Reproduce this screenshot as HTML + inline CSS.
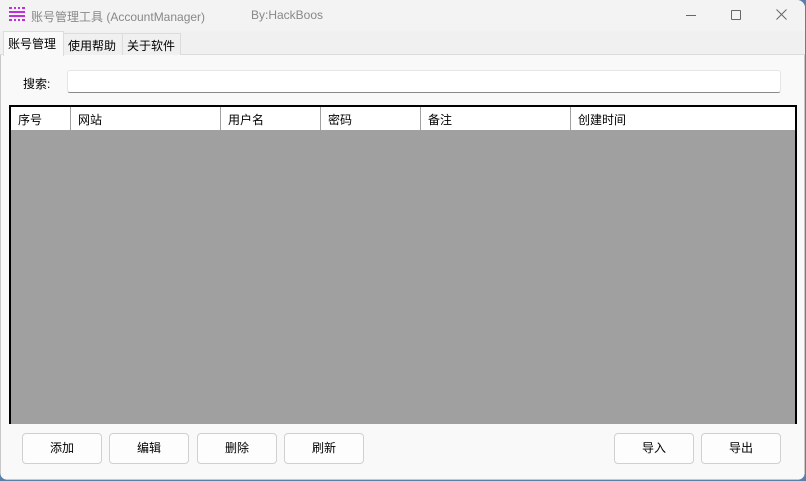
<!DOCTYPE html>
<html><head><meta charset="utf-8"><style>
*{margin:0;padding:0;box-sizing:border-box}
body{width:806px;height:481px;background:#5a7fa8;position:relative;overflow:hidden;font-family:"Liberation Sans","Noto Sans CJK SC",sans-serif;font-size:12px;color:#000}
.win{position:absolute;left:0;top:0;width:805px;height:480px;background:#f9f9f9;box-shadow:inset 0 0 0 1px #c8c8c8;border-radius:0 8px 8px 8px;overflow:hidden}
.title{position:absolute;left:0;top:0;width:100%;height:31px;background:#f3f3f3}
.t{position:absolute;top:8px;color:#888;font-size:12px}
.tabs{position:absolute;left:0;top:31px;width:100%;height:24px;background:#f0f0f0;border-bottom:1px solid #dcdcdc}
.tab{position:absolute;top:2px;height:22px;border:1px solid #dcdcdc;border-bottom:none;background:#f0f0f0;padding:3px 4px 0;font-size:12px;white-space:nowrap}
.tab.a{top:0;height:25px;background:#f9f9f9;padding-top:3px}
.btn{position:absolute;top:433px;width:80px;height:31px;background:#fdfdfd;border:1px solid #d0d0d0;border-radius:4px;text-align:center;line-height:29px;font-size:12px}
.th{position:absolute;top:0;height:24px;border-right:1px solid #a0a0a0;padding:4px 0 0 7px}
</style></head><body>
<div class="win">
<div class="title">
<svg style="position:absolute;left:9px;top:7px" width="16" height="15"><g fill="#c030d8"><rect x="0" y="0" width="3" height="2"/><rect x="5" y="0" width="2" height="2"/><rect x="9" y="0" width="2" height="2"/><rect x="13" y="0" width="3" height="2"/><rect x="0" y="4" width="16" height="2"/><rect x="0" y="8" width="16" height="2"/><rect x="0" y="12" width="3" height="2"/><rect x="5" y="12" width="2" height="2"/><rect x="9" y="12" width="2" height="2"/><rect x="13" y="12" width="3" height="2"/></g></svg>
<span class="t" style="left:31px">账号管理工具 (AccountManager)</span>
<span class="t" style="left:251px">By:HackBoos</span>
<div style="position:absolute;left:686px;top:15px;width:10px;height:1px;background:#666"></div>
<div style="position:absolute;left:731px;top:10px;width:10px;height:10px;border:1px solid #666;border-radius:1px"></div>
<svg style="position:absolute;left:776px;top:9px" width="11" height="11"><path d="M0.5 0.5L10.5 10.5M10.5 0.5L0.5 10.5" stroke="#666" stroke-width="1"/></svg>
</div>
<div class="tabs">
<div class="tab a" style="left:3px;width:61px">账号管理</div>
<div class="tab" style="left:63px;width:60px">使用帮助</div>
<div class="tab" style="left:122px;width:59px">关于软件</div>
</div>
<span style="position:absolute;left:23px;top:75px">搜索:</span>
<div style="position:absolute;left:67px;top:70px;width:714px;height:23px;background:#fff;border:1px solid #e5e5e5;border-bottom:1px solid #8a8a8a;border-radius:3px"></div>
<div style="position:absolute;left:9px;top:105px;width:788px;height:330px;background:#a0a0a0;border:2px solid #000;border-bottom:none">
<div style="position:absolute;left:0;top:0;width:784px;height:24px;background:#fff;border-bottom:1px solid #a0a0a0">
<div class="th" style="left:0;width:60px">序号</div>
<div class="th" style="left:60px;width:150px">网站</div>
<div class="th" style="left:210px;width:100px">用户名</div>
<div class="th" style="left:310px;width:100px">密码</div>
<div class="th" style="left:410px;width:150px">备注</div>
<div class="th" style="left:560px;width:224px;border:none">创建时间</div>
</div></div>
<div style="position:absolute;left:1px;top:424px;width:803px;height:55px;background:#f9f9f9"></div>
<div class="btn" style="left:22px">添加</div>
<div class="btn" style="left:109px">编辑</div>
<div class="btn" style="left:197px">删除</div>
<div class="btn" style="left:284px">刷新</div>
<div class="btn" style="left:614px">导入</div>
<div class="btn" style="left:701px">导出</div>
</div>
</body></html>
